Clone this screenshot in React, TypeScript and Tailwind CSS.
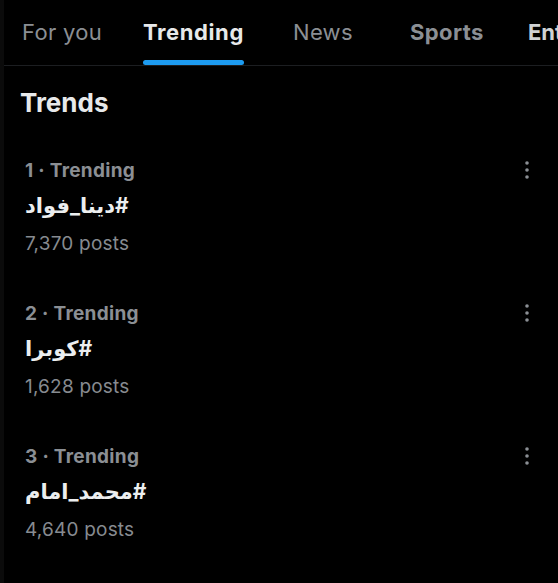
import React from 'react';

const trends = [
  { rank: 1, tag: '#دينا_فواد', posts: '7,370 posts' },
  { rank: 2, tag: '#كوبرا', posts: '1,628 posts' },
  { rank: 3, tag: '#محمد_امام', posts: '4,640 posts' },
];

function MoreIcon() {
  return (
    <svg width="6" height="20" viewBox="0 0 6 20" className="text-[#8b8f94]">
      <circle cx="3" cy="3" r="1.8" fill="currentColor" />
      <circle cx="3" cy="10" r="1.8" fill="currentColor" />
      <circle cx="3" cy="17" r="1.8" fill="currentColor" />
    </svg>
  );
}

export default function App() {
  return (
    <div
      className="w-[558px] h-[583px] overflow-hidden bg-black border-l-4 border-[#0b0b0b]"
      style={{ fontFamily: 'Inter, "DejaVu Sans", sans-serif' }}
    >
      {/* tabs */}
      <nav className="flex h-[66px] border-b border-[#1c1e21] whitespace-nowrap text-[22px]">
        <div className="ml-[18px] w-[121px] shrink-0 pt-[16px] text-[#8b8f94] tracking-[0.3px]">For you</div>
        <div className="w-[150px] shrink-0">
          <div className="inline-flex h-full flex-col pt-[16px] font-bold text-[#e7e9ea] tracking-[0.6px]">
            <span>Trending</span>
            <span className="mt-auto h-[5px] w-full rounded-full bg-[#1d9bf0]" />
          </div>
        </div>
        <div className="w-[117px] shrink-0 pt-[16px] text-[#8b8f94] tracking-[0.3px]">News</div>
        <div className="w-[118px] shrink-0 pt-[16px] font-bold text-[#8b8f94] tracking-[0.4px]">Sports</div>
        <div className="shrink-0 pt-[16px] font-bold text-[#d0d2d4]">Entertainment</div>
      </nav>

      <h2 className="ml-[16px] mt-[21px] text-[26px] font-bold leading-[32px] text-[#e7e9ea]">
        Trends
      </h2>

      <ul className="mt-[40px]">
        {trends.map((t) => (
          <li key={t.rank} className="flex h-[143px] pl-[21px] pr-[28px]">
            <div className="flex-1">
              <div className="text-[19px] font-bold leading-[24px] text-[#8b8f94] tracking-[0.3px]">
                {t.rank} · Trending
              </div>
              <div className="mt-[10px] text-[21px] font-bold leading-[26px] text-[#eceeef]">
                <span dir="rtl" className="inline-block">
                  {t.tag}
                </span>
              </div>
              <div className="mt-[13px] text-[19px] leading-[24px] text-[#878b90] tracking-[0.2px]">
                {t.posts}
              </div>
            </div>
            <div className="pt-[1px]">
              <MoreIcon />
            </div>
          </li>
        ))}
      </ul>
    </div>
  );
}
